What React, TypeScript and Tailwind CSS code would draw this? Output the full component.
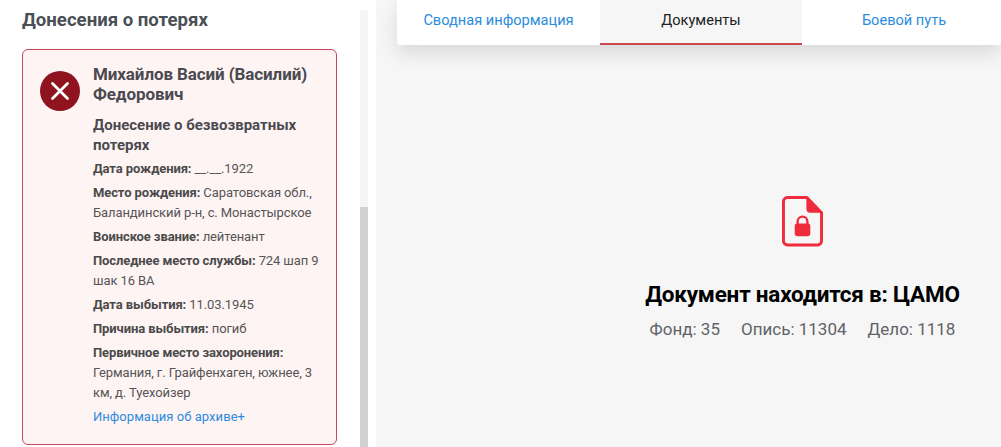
import React from "react";

const pt = "[font-family:Roboto,'Liberation_Sans',sans-serif]";

function Row({ label, value }: { label: string; value: React.ReactNode }) {
  return (
    <p className="mt-1 text-[13px] leading-5 text-[#555] tracking-[-0.1px]">
      <b className="font-bold text-[#4a4a4a]">{label}</b> {value}
    </p>
  );
}

export default function App() {
  return (
    <div className={`flex h-[447px] w-[1001px] overflow-hidden bg-white ${pt}`}>
      {/* left column */}
      <div className="w-[360px] shrink-0 pl-[22px] pr-[23px]">
        <h2 className="mt-[8px] text-[18.6px] leading-6 font-bold text-[#4a4f55]">Донесения о потерях</h2>
        <div className="mt-[17px] flex h-[396px] rounded-md border border-[#c9475a] bg-[#fff4f4] pl-[17px] pr-[12px] pt-[14px]">
          <div className="mt-[7px] flex h-10 w-10 shrink-0 items-center justify-center rounded-full bg-[#8f1420]">
            <svg width="20" height="20" viewBox="0 0 20 20" stroke="#fff" strokeWidth="2.8" strokeLinecap="round">
              <path d="M2.5 2.5 17.5 17.5M17.5 2.5 2.5 17.5" />
            </svg>
          </div>
          <div className="ml-[13px] min-w-0">
            <h3 className="text-[17px] leading-5 font-bold text-[#4a4a50] tracking-[-0.1px]">Михайлов Васий (Василий) Федорович</h3>
            <h4 className="mt-[11px] text-[15px] leading-5 font-bold text-[#4a4a50]">Донесение о безвозвратных потерях</h4>
            <Row label="Дата рождения:" value="__.__.1922" />
            <Row label="Место рождения:" value="Саратовская обл., Баландинский р-н, с. Монастырское" />
            <Row label="Воинское звание:" value="лейтенант" />
            <Row label="Последнее место службы:" value="724 шап 9 шак 16 ВА" />
            <Row label="Дата выбытия:" value="11.03.1945" />
            <Row label="Причина выбытия:" value="погиб" />
            <Row label="Первичное место захоронения:" value="Германия, г. Грайфенхаген, южнее, 3 км, д. Туехойзер" />
            <p className="mt-1 text-[13px] leading-5 text-[#2b8ce0] tracking-[0.05px]">Информация об архиве+</p>
          </div>
        </div>
      </div>

      {/* scrollbar */}
      <div className="mt-[10px] w-2 shrink-0 bg-[#f5f5f5]">
        <div className="mt-[197px] h-[240px] bg-[#d1d1d1]" />
      </div>

      {/* right panel */}
      <div className="ml-2 flex min-w-0 flex-1 flex-col bg-[#f6f6f6] pl-[21px]">
        <div className="grid h-[45px] grid-cols-[203px_202px_199px] rounded-bl-[3px] bg-white text-[14.6px] shadow-[0_8px_20px_rgba(0,0,0,0.12)]">
          <div className="flex items-center justify-center pb-[3px] text-[#2b8ce0]">Сводная информация</div>
          <div className="flex items-center justify-center border-b-2 border-[#c9484c] bg-[#f6f6f6] pb-[1px] text-[#222]">Документы</div>
          <div className="flex items-center justify-center pb-[3px] pl-[5px] text-[#2b8ce0]">Боевой путь</div>
        </div>
        <div className="flex flex-1 flex-col items-center pl-[207px] pt-[151px]">
          <svg width="41" height="51" viewBox="0 0 42 52">
            <path d="M5 1.5H25L40 17V46a4 4 0 0 1-4 4H5a4 4 0 0 1-4-4V5.5a4 4 0 0 1 4-4Z" transform="translate(0.5 0)" fill="none" stroke="#ee2c3c" strokeWidth="3" strokeLinejoin="round" />
            <path d="M25 1 41 17H29a4 4 0 0 1-4-4Z" fill="#ee2c3c" />
            <path d="M16 29v-3a5 5 0 0 1 10 0v3" fill="none" stroke="#ee2c3c" strokeWidth="2.4" />
            <rect x="13" y="28" width="16" height="13" rx="2.5" fill="#ee2c3c" />
          </svg>
          <h1 className="mt-[33px] whitespace-nowrap text-[22.5px] leading-7 font-bold text-black tracking-[-0.2px]">Документ находится в: ЦАМО</h1>
          <div className="mt-[9px] flex gap-[21px] whitespace-nowrap text-[17px] leading-6 text-[#5f6368]">
            <span>Фонд: 35</span>
            <span>Опись: 11304</span>
            <span>Дело: 1118</span>
          </div>
        </div>
      </div>
    </div>
  );
}
